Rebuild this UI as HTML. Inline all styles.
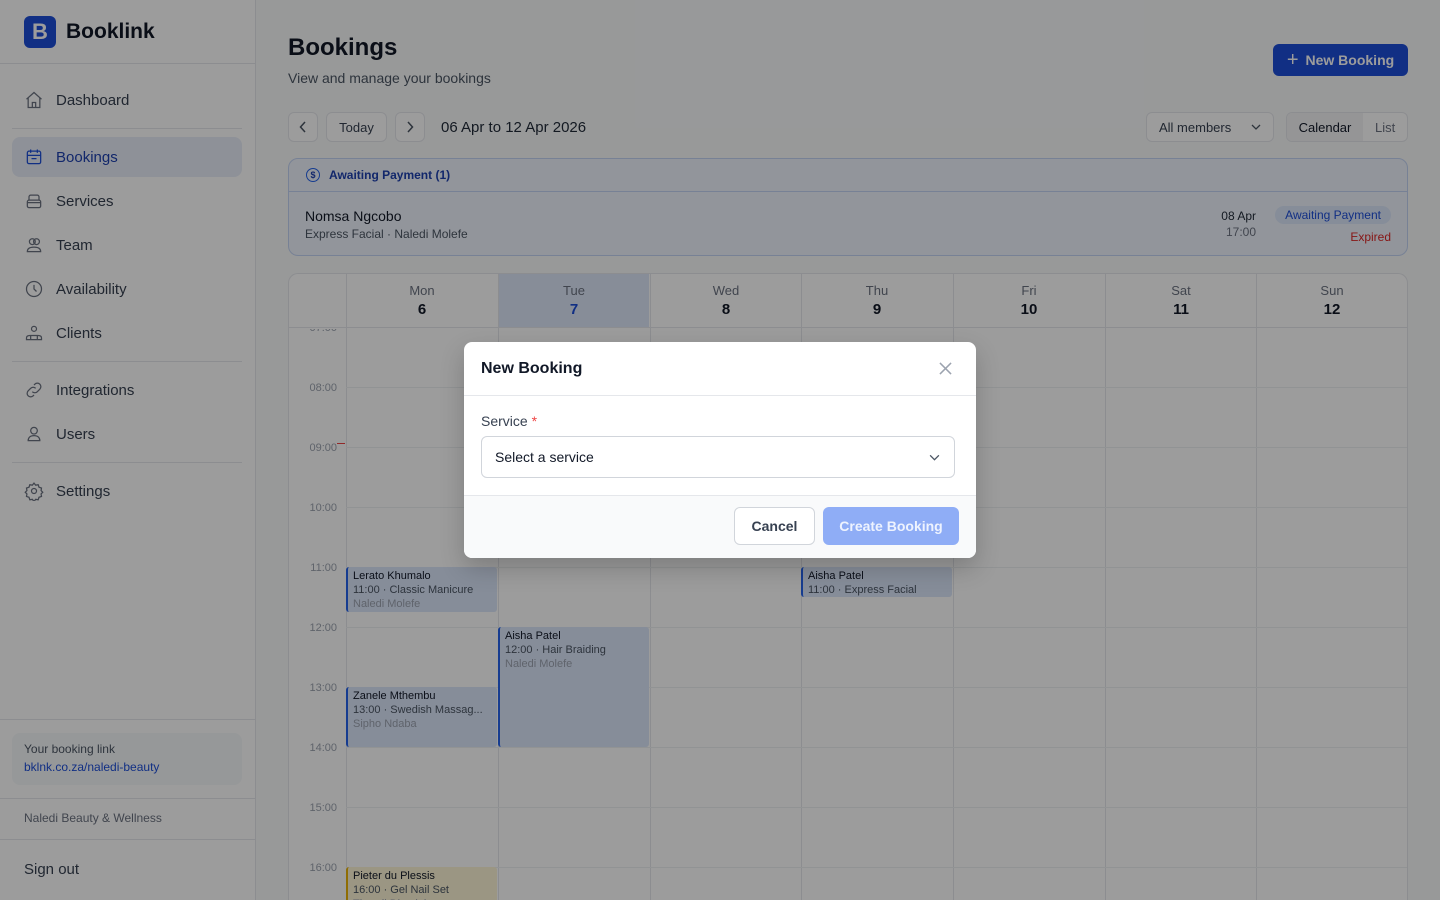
<!DOCTYPE html>
<html><head><meta charset="utf-8"><style>
*{box-sizing:border-box;margin:0;padding:0}
html,body{width:1440px;height:900px;overflow:hidden}
body{font-family:"Liberation Sans",sans-serif;background:#f9fafb;color:#111827;position:relative}
.sb{position:absolute;left:0;top:0;width:256px;height:900px;background:#fff;border-right:1px solid #e5e7eb}
.logo{height:64px;border-bottom:1px solid #e5e7eb;display:flex;align-items:center;padding-left:24px;gap:10px}
.lb{width:32px;height:32px;background:#1d4ed8;border-radius:6px;color:#fff;font-weight:700;font-size:22px;display:flex;align-items:center;justify-content:center}
.lt{font-size:21px;font-weight:700}
.nav{position:absolute;left:12px;width:230px;height:40px;display:flex;align-items:center;padding-left:12px;gap:12px;font-size:15px;color:#374151;border-radius:8px}
.nav svg{width:20px;height:20px;stroke:#6b7280;fill:none;stroke-width:1.5}
.nav.act{background:#e8eef9;color:#1e40af}.nav.act svg{stroke:#1d4ed8}
.hr{position:absolute;left:12px;width:230px;border-top:1px solid #e5e7eb}
.btn{position:absolute;border:1px solid #e5e7eb;background:#fff;border-radius:6px;font-size:13px;color:#374151;display:flex;align-items:center;justify-content:center}
.cal{position:absolute;left:288px;top:273px;width:1120px;height:640px;background:#fff;border:1px solid #e5e7eb;border-radius:10px;overflow:hidden}
.col{position:absolute;top:0;bottom:0;border-left:1px solid #e5e7eb}
.dh{position:absolute;top:0;height:53px;text-align:center;font-size:13px;color:#6b7280;padding-top:9px}
.dh b{display:block;font-size:15px;color:#111827;margin-top:3px}
.hl{position:absolute;left:57px;right:0;border-top:1px solid #eef0f2}
.tl{position:absolute;left:0;width:48px;text-align:right;font-size:11px;color:#9ca3af}
.ev{position:absolute;background:#dbe6fb;border-left:2px solid #2563eb;border-radius:3px;padding:2px 5px;font-size:11px;line-height:14px;color:#4b5563;overflow:hidden;white-space:nowrap}
.ev b{font-weight:400;color:#111827;display:block}
.ev i{font-style:normal;color:#9ca3af;display:block}
.ov{position:absolute;left:0;top:0;width:1440px;height:900px;background:rgba(0,0,0,0.39)}
.modal{position:absolute;left:464px;top:342px;width:512px;height:216px;background:#fff;border-radius:8px;overflow:hidden;box-shadow:0 10px 25px rgba(0,0,0,.2)}
</style></head><body>
<div class="sb">
 <div class="logo"><div class="lb">B</div><div class="lt">Booklink</div></div>
 <div class="nav" style="top:80px"><svg viewBox="0 0 24 24"><path d="M3 11l9-8 9 8M5 9.5V21h14V9.5M10 21v-6h4v6"/></svg>Dashboard</div>
 <div class="hr" style="top:128px"></div>
 <div class="nav act" style="top:137px"><svg viewBox="0 0 24 24"><rect x="4" y="5" width="16" height="15" rx="2"/><path d="M8 3v4M16 3v4M4 10h16M9 14h6"/></svg>Bookings</div>
 <div class="nav" style="top:181px"><svg viewBox="0 0 24 24"><rect x="4" y="11" width="16" height="9" rx="2"/><path d="M6 11V7a2 2 0 012-2h8a2 2 0 012 2v4M4 14h16"/></svg>Services</div>
 <div class="nav" style="top:225px"><svg viewBox="0 0 24 24"><circle cx="10" cy="8" r="3.5"/><circle cx="15" cy="8" r="3.5"/><path d="M4 20c0-3.5 2.5-5.5 8-5.5s8 2 8 5.5z"/></svg>Team</div>
 <div class="nav" style="top:269px"><svg viewBox="0 0 24 24"><circle cx="12" cy="12" r="9"/><path d="M12 7v5l3 3"/></svg>Availability</div>
 <div class="nav" style="top:313px"><svg viewBox="0 0 24 24"><circle cx="12" cy="7" r="3"/><path d="M3 20v-2c0-2 1.5-3 4-3h10c2.5 0 4 1 4 3v2zM8 15v5M16 15v5"/></svg>Clients</div>
 <div class="hr" style="top:361px"></div>
 <div class="nav" style="top:370px"><svg viewBox="0 0 24 24"><path d="M10 14a4 4 0 006 0l3-3a4 4 0 00-6-6l-1 1M14 10a4 4 0 00-6 0l-3 3a4 4 0 006 6l1-1"/></svg>Integrations</div>
 <div class="nav" style="top:414px"><svg viewBox="0 0 24 24"><circle cx="12" cy="8" r="4"/><path d="M5 20c0-4 3-6 7-6s7 2 7 6z"/></svg>Users</div>
 <div class="hr" style="top:462px"></div>
 <div class="nav" style="top:471px"><svg viewBox="0 0 24 24"><circle cx="12" cy="12" r="3"/><path d="M12 2.5l2 2.5 3-.5 1 3 3 1-.5 3 2 2-2 2 .5 3-3 1-1 3-3-.5-2 2.5-2-2.5-3 .5-1-3-3-1 .5-3-2-2 2-2-.5-3 3-1 1-3 3 .5z"/></svg>Settings</div>
 <div style="position:absolute;top:719px;left:0;right:0;border-top:1px solid #e5e7eb"></div>
 <div style="position:absolute;top:733px;left:12px;width:230px;height:52px;background:#f6f8fb;border-radius:8px;padding:7px 12px;font-size:12px;line-height:18px;color:#4b5563">Your booking link<br><span style="color:#1d4ed8">bklnk.co.za/naledi-beauty</span></div>
 <div style="position:absolute;top:798px;left:0;right:0;border-top:1px solid #e5e7eb"></div>
 <div style="position:absolute;top:811px;left:24px;font-size:12px;color:#6b7280">Naledi Beauty &amp; Wellness</div>
 <div style="position:absolute;top:839px;left:0;right:0;border-top:1px solid #e5e7eb"></div>
 <div style="position:absolute;top:861px;left:24px;font-size:15px;color:#374151">Sign out</div>
</div>
<div style="position:absolute;left:288px;top:34px;font-size:24px;font-weight:700">Bookings</div>
<div style="position:absolute;left:288px;top:70px;font-size:14px;color:#4b5563">View and manage your bookings</div>
<div style="position:absolute;left:1273px;top:44px;width:135px;height:32px;background:#1d4ed8;border-radius:6px;color:#fff;font-size:14px;font-weight:700;display:flex;align-items:center;justify-content:center;gap:7px"><span style="font-size:20px;font-weight:400;line-height:1">+</span>New Booking</div>
<div class="btn" style="left:288px;top:112px;width:30px;height:30px"><svg width="8" height="12" viewBox="0 0 8 12" fill="none" stroke="#4b5563" stroke-width="1.5"><path d="M6 1L1.5 6 6 11"/></svg></div>
<div class="btn" style="left:326px;top:112px;width:61px;height:30px">Today</div>
<div class="btn" style="left:395px;top:112px;width:30px;height:30px"><svg width="8" height="12" viewBox="0 0 8 12" fill="none" stroke="#4b5563" stroke-width="1.5"><path d="M2 1l4.5 5L2 11"/></svg></div>
<div style="position:absolute;left:441px;top:119px;font-size:15px;color:#1f2937">06 Apr to 12 Apr 2026</div>
<div class="btn" style="left:1146px;top:112px;width:128px;height:30px;justify-content:space-between;padding:0 12px">All members <svg width="10" height="6" viewBox="0 0 10 6" fill="none" stroke="#4b5563" stroke-width="1.3"><path d="M1 1l4 4 4-4"/></svg></div>
<div class="btn" style="left:1286px;top:112px;width:122px;height:30px;justify-content:flex-start;overflow:hidden"><span style="background:#f3f4f6;width:76px;height:100%;display:flex;align-items:center;justify-content:center;color:#111827">Calendar</span><span style="margin-left:12px;color:#6b7280">List</span></div>
<div style="position:absolute;left:288px;top:158px;width:1120px;height:98px;background:#eff4fd;border:1px solid #c3d3f3;border-radius:10px">
 <div style="height:33px;border-bottom:1px solid #c3d3f3;display:flex;align-items:center;padding-left:17px;gap:9px;font-size:12px;font-weight:700;color:#1e40af"><span style="width:14px;height:14px;border:1.5px solid #2563eb;border-radius:50%;font-size:9px;display:flex;align-items:center;justify-content:center">$</span>Awaiting Payment (1)</div>
 <div style="position:absolute;left:16px;top:49px;font-size:14px">Nomsa Ngcobo</div>
 <div style="position:absolute;left:16px;top:68px;font-size:12px;color:#4b5563">Express Facial · Naledi Molefe</div>
 <div style="position:absolute;right:151px;top:49px;font-size:12px;text-align:right;line-height:16px;color:#1f2937">08 Apr<br><span style="color:#6b7280">17:00</span></div>
 <div style="position:absolute;right:16px;top:47px;background:#dbe6fb;color:#1d4ed8;font-size:12px;padding:2px 10px;border-radius:10px">Awaiting Payment</div>
 <div style="position:absolute;right:16px;top:71px;font-size:12px;color:#dc2626">Expired</div>
</div>
<div class="cal" style="height:627px;border-bottom:none;border-radius:10px 10px 0 0">
 <div style="position:absolute;left:209px;top:0;width:151px;height:53px;background:#dde6f8"></div>
 <div class="col" style="left:57px"></div><div class="col" style="left:209px"></div><div class="col" style="left:361px"></div><div class="col" style="left:512px"></div><div class="col" style="left:664px"></div><div class="col" style="left:816px"></div><div class="col" style="left:967px"></div>
 <div style="position:absolute;left:0;right:0;top:53px;border-top:1px solid #e5e7eb"></div>
 <div class="dh" style="left:57px;width:152px">Mon<b>6</b></div>
 <div class="dh" style="left:209px;width:152px">Tue<b style="color:#1d4ed8">7</b></div>
 <div class="dh" style="left:361px;width:152px">Wed<b>8</b></div>
 <div class="dh" style="left:512px;width:152px">Thu<b>9</b></div>
 <div class="dh" style="left:664px;width:152px">Fri<b>10</b></div>
 <div class="dh" style="left:816px;width:152px">Sat<b>11</b></div>
 <div class="dh" style="left:967px;width:152px">Sun<b>12</b></div>
 <div class="hl" style="top:113px"></div><div class="hl" style="top:173px"></div><div class="hl" style="top:233px"></div><div class="hl" style="top:293px"></div><div class="hl" style="top:353px"></div><div class="hl" style="top:413px"></div><div class="hl" style="top:473px"></div><div class="hl" style="top:533px"></div><div class="hl" style="top:593px"></div>
 <div class="tl" style="top:48px;clip-path:inset(7px 0 0 0)">07:00</div>
 <div class="tl" style="top:108px">08:00</div><div class="tl" style="top:168px">09:00</div><div class="tl" style="top:228px">10:00</div><div class="tl" style="top:288px">11:00</div><div class="tl" style="top:348px">12:00</div><div class="tl" style="top:408px">13:00</div><div class="tl" style="top:468px">14:00</div><div class="tl" style="top:528px">15:00</div><div class="tl" style="top:588px">16:00</div>
 <div style="position:absolute;left:48px;top:169px;width:8px;border-top:1.5px solid #ef4444"></div>
 <div class="ev" style="left:57px;top:293px;width:151px;height:45px"><b>Lerato Khumalo</b>11:00 · Classic Manicure<i>Naledi Molefe</i></div>
 <div class="ev" style="left:57px;top:413px;width:151px;height:60px"><b>Zanele Mthembu</b>13:00 · Swedish Massag...<i>Sipho Ndaba</i></div>
 <div class="ev" style="left:209px;top:353px;width:151px;height:120px"><b>Aisha Patel</b>12:00 · Hair Braiding<i>Naledi Molefe</i></div>
 <div class="ev" style="left:512px;top:293px;width:151px;height:30px"><b>Aisha Patel</b>11:00 · Express Facial</div>
 <div class="ev" style="left:57px;top:593px;width:151px;height:60px;background:#fdf6d6;border-color:#eab308"><b>Pieter du Plessis</b>16:00 · Gel Nail Set<i>Thandi Dlamini</i></div>
</div>
<div class="ov"></div>
<div class="modal">
 <div style="height:54px;border-bottom:1px solid #e5e7eb;display:flex;align-items:center;justify-content:space-between;padding:0 24px 0 17px"><span style="font-size:16px;font-weight:700">New Booking</span><svg width="13" height="13" viewBox="0 0 14 14" stroke="#9ca3af" stroke-width="1.6"><path d="M1 1l12 12M13 1L1 13"/></svg></div>
 <div style="position:absolute;left:17px;top:71px;font-size:14px;color:#374151">Service <span style="color:#ef4444">*</span></div>
 <div style="position:absolute;left:17px;top:94px;width:474px;height:42px;border:1px solid #d1d5db;border-radius:6px;display:flex;align-items:center;justify-content:space-between;padding:0 14px 0 13px;font-size:14px;color:#111827">Select a service<svg width="11" height="7" viewBox="0 0 12 8" fill="none" stroke="#4b5563" stroke-width="1.5"><path d="M1 1.5l5 5 5-5"/></svg></div>
 <div style="position:absolute;left:0;right:0;top:153px;bottom:0;background:#f9fafb;border-top:1px solid #e5e7eb"></div>
 <div style="position:absolute;left:270px;top:165px;width:81px;height:38px;border:1px solid #d1d5db;border-radius:6px;background:#fff;font-size:14px;font-weight:700;color:#374151;display:flex;align-items:center;justify-content:center">Cancel</div>
 <div style="position:absolute;left:359px;top:165px;width:136px;height:38px;border-radius:6px;background:#8fadf6;font-size:14px;font-weight:700;color:#eef3fe;display:flex;align-items:center;justify-content:center">Create Booking</div>
</div>
</body></html>
